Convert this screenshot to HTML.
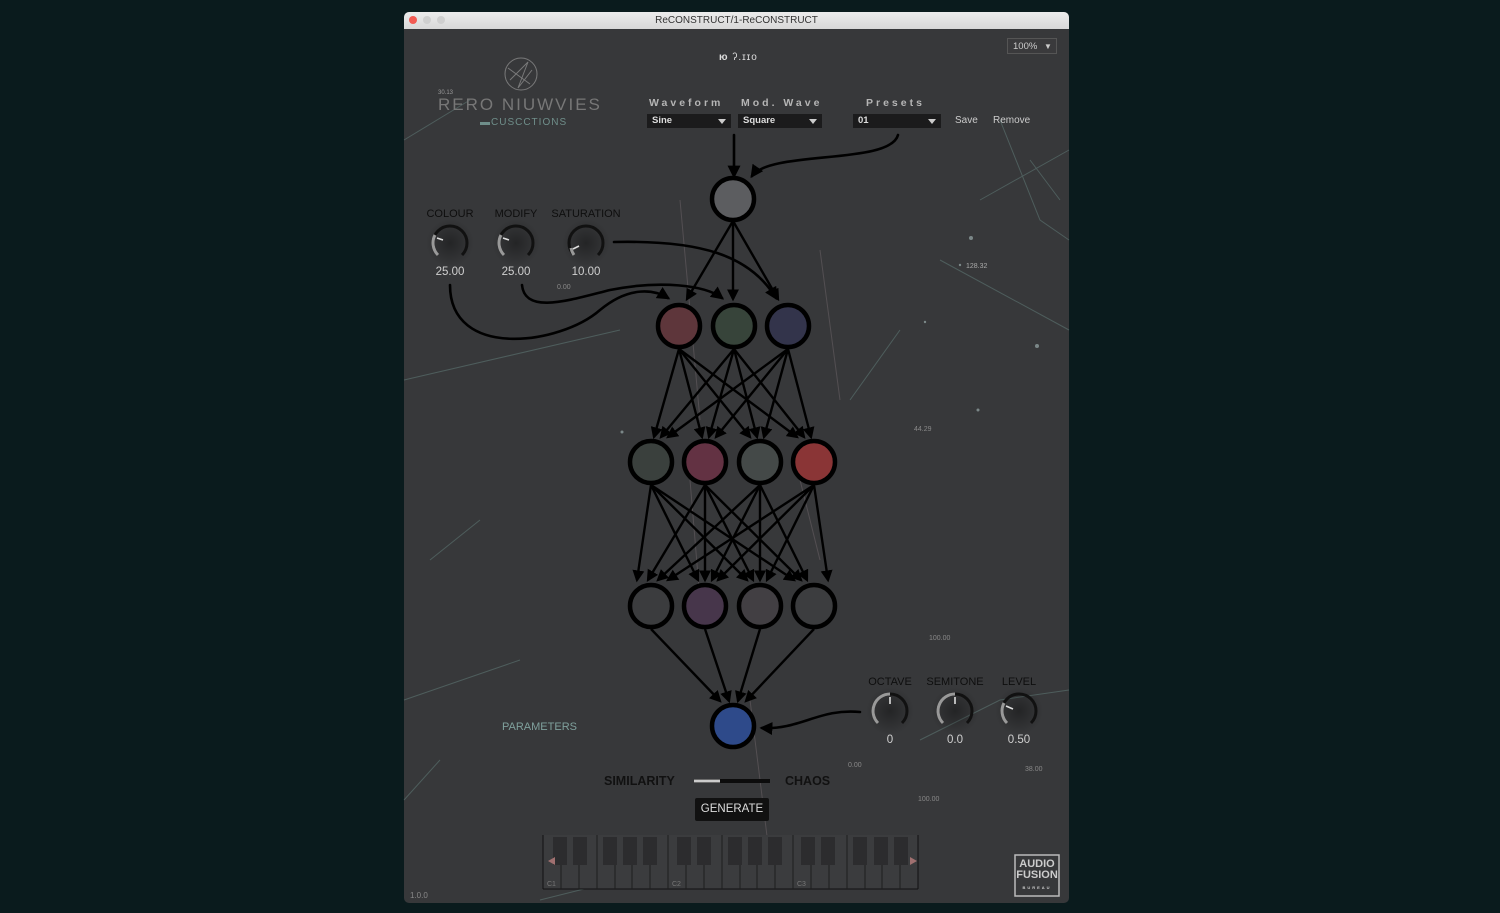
<!DOCTYPE html>
<html><head><meta charset="utf-8"><style>
body{margin:0;width:1500px;height:913px;background:#0a1b1d;overflow:hidden;font-family:"Liberation Sans",sans-serif;position:relative}
.win{position:absolute;left:404px;top:12px;width:665px;height:891px;background:#37383a;border-radius:5px;overflow:hidden}
.tb{height:17px;background:linear-gradient(#ececec,#d8d8d8);text-align:center;font-size:10px;line-height:17px;color:#333;position:relative}
.dot{position:absolute;top:4px;width:8px;height:8px;border-radius:50%;background:#cfcfcf}
.t{position:absolute;color:#bdbdbd;font-size:11px;white-space:nowrap}
.lbl{position:absolute;color:#0e0e0e;font-size:11px;white-space:nowrap;transform:translateX(-50%)}
.val{position:absolute;color:#d0d0d0;font-size:11.5px;white-space:nowrap;transform:translateX(-50%)}
.dd{position:absolute;height:14px;background:#1b1b1c;color:#ddd;font-size:9.5px;font-weight:bold;line-height:14px;padding-left:5px;box-sizing:border-box}
.dd:after{content:"";position:absolute;right:5px;top:5px;border:4px solid transparent;border-top:5px solid #ccc;border-bottom:0}
.hd{position:absolute;color:#b5b5b5;font-size:10.5px;font-weight:bold;letter-spacing:3px}
</style></head><body>
<div class="win">
<div class="tb"><span class="dot" style="left:5px;background:#f25a52"></span><span class="dot" style="left:19px"></span><span class="dot" style="left:33px"></span>ReCONSTRUCT/1-ReCONSTRUCT</div>
</div>
<svg width="1500" height="913" style="position:absolute;left:0;top:0">
<defs><marker id="a" markerWidth="5" markerHeight="5" refX="4" refY="2.5" orient="auto" markerUnits="strokeWidth"><path d="M0,0L5,2.5L0,5z" fill="#000"/></marker>
<radialGradient id="sh"><stop offset="0" stop-color="#000" stop-opacity=".35"/><stop offset="1" stop-color="#000" stop-opacity="0"/></radialGradient></defs>
<g stroke="#6a8c88" stroke-width="1" opacity=".45" fill="none">
<path d="M404 140L470 100M404 380L620 330M430 560L480 520M404 700L520 660M980 200L1069 150M940 260L1069 330M1000 120L1040 220L1069 240M850 400L900 330M920 740L1000 700L1069 690M404 800L440 760M540 900L620 880M1030 160L1060 200"/>
</g>
<g stroke="#8a7a80" stroke-width="1" opacity=".35" fill="none"><path d="M680 200L700 420M820 250L840 400M690 480L700 600M750 700L770 860M800 480L820 560"/></g>
<g fill="#9aa" opacity=".7"><circle cx="1037" cy="346" r="2"/><circle cx="978" cy="410" r="1.5"/><circle cx="622" cy="432" r="1.5"/><circle cx="925" cy="322" r="1.2"/><circle cx="971" cy="238" r="2"/><circle cx="960" cy="265" r="1.2"/></g>
<g fill="#888" font-size="7" font-family="Liberation Sans"><text x="557" y="289">0.00</text><text x="966" y="268" fill="#aaa">128.32</text><text x="914" y="431">44.29</text><text x="929" y="640">100.00</text><text x="848" y="767">0.00</text><text x="918" y="801">100.00</text><text x="1025" y="771">38.00</text><text x="410" y="898" font-size="8">1.0.0</text></g>
<g stroke="#000" stroke-width="2.6" fill="none" stroke-linecap="round">
<path d="M734 135V176" marker-end="url(#a)"/>
<path d="M898 135C890 165 770 150 752 176" marker-end="url(#a)"/>
<path d="M450 285C450 360 560 345 600 310C630 285 655 290 668 298" marker-end="url(#a)"/>
<path d="M522 285C525 315 570 300 610 290C660 280 705 285 722 298" marker-end="url(#a)"/>
<path d="M614 242C700 240 750 255 776 298" marker-end="url(#a)"/>
<path d="M860 712C820 708 800 730 762 728" marker-end="url(#a)"/>
</g>
<g stroke="#000" stroke-width="2.4" marker-end="url(#a)">
<line x1="733" y1="221" x2="687" y2="299"/><line x1="733" y1="221" x2="733" y2="299"/><line x1="733" y1="221" x2="778" y2="299"/>
<line x1="679" y1="349" x2="654" y2="437"/><line x1="679" y1="349" x2="702" y2="437"/><line x1="679" y1="349" x2="750" y2="437"/><line x1="679" y1="349" x2="797" y2="437"/>
<line x1="734" y1="349" x2="661" y2="437"/><line x1="734" y1="349" x2="709" y2="437"/><line x1="734" y1="349" x2="757" y2="437"/><line x1="734" y1="349" x2="804" y2="437"/>
<line x1="788" y1="349" x2="668" y2="437"/><line x1="788" y1="349" x2="716" y2="437"/><line x1="788" y1="349" x2="764" y2="437"/><line x1="788" y1="349" x2="811" y2="437"/>
<line x1="651" y1="485" x2="637" y2="580"/><line x1="651" y1="485" x2="698" y2="580"/><line x1="651" y1="485" x2="747" y2="580"/><line x1="651" y1="485" x2="794" y2="580"/>
<line x1="705" y1="485" x2="648" y2="580"/><line x1="705" y1="485" x2="705" y2="580"/><line x1="705" y1="485" x2="753" y2="580"/><line x1="705" y1="485" x2="801" y2="580"/>
<line x1="760" y1="485" x2="658" y2="580"/><line x1="760" y1="485" x2="712" y2="580"/><line x1="760" y1="485" x2="760" y2="580"/><line x1="760" y1="485" x2="807" y2="580"/>
<line x1="814" y1="485" x2="668" y2="580"/><line x1="814" y1="485" x2="718" y2="580"/><line x1="814" y1="485" x2="767" y2="580"/><line x1="814" y1="485" x2="828" y2="580"/>
<line x1="651" y1="629" x2="720" y2="701"/><line x1="705" y1="629" x2="729" y2="701"/><line x1="760" y1="629" x2="738" y2="701"/><line x1="814" y1="629" x2="746" y2="701"/>
</g>
<g stroke="#000" stroke-width="4.5">
<circle cx="733" cy="199" r="21" fill="#5c5d60"/>
<circle cx="679" cy="326" r="21" fill="#5e363b"/><circle cx="734" cy="326" r="21" fill="#37443a"/><circle cx="788" cy="326" r="21" fill="#33344b"/>
<circle cx="651" cy="462" r="21" fill="#3a403d"/><circle cx="705" cy="462" r="21" fill="#633243"/><circle cx="760" cy="462" r="21" fill="#444948"/><circle cx="814" cy="462" r="21" fill="#8a3536"/>
<circle cx="651" cy="606" r="21" fill="#3b3c3e"/><circle cx="705" cy="606" r="21" fill="#47364b"/><circle cx="760" cy="606" r="21" fill="#423f43"/><circle cx="814" cy="606" r="21" fill="#3c3d3f"/>
<circle cx="733" cy="726" r="21" fill="#2e4a8a"/>
</g>
<g fill="none" stroke-width="3">
<g transform="translate(450,243)"><circle r="24" fill="url(#sh)" stroke="none"/><path d="M-12 12A17 17 0 1 1 12 12" stroke="#111"/><path d="M-12 12A17 17 0 0 1 -15 -8" stroke="#999"/><line x1="-13" y1="-5" x2="-7" y2="-3" stroke="#ddd" stroke-width="1.6"/></g>
<g transform="translate(516,243)"><circle r="24" fill="url(#sh)" stroke="none"/><path d="M-12 12A17 17 0 1 1 12 12" stroke="#111"/><path d="M-12 12A17 17 0 0 1 -15 -8" stroke="#999"/><line x1="-13" y1="-5" x2="-7" y2="-3" stroke="#ddd" stroke-width="1.6"/></g>
<g transform="translate(586,243)"><circle r="24" fill="url(#sh)" stroke="none"/><path d="M-12 12A17 17 0 1 1 12 12" stroke="#111"/><path d="M-12 12A17 17 0 0 1 -15 5" stroke="#999"/><line x1="-13" y1="6" x2="-7" y2="3" stroke="#ddd" stroke-width="1.6"/></g>
<g transform="translate(890,711)"><circle r="24" fill="url(#sh)" stroke="none"/><path d="M-12 12A17 17 0 1 1 12 12" stroke="#111"/><path d="M-12 12A17 17 0 0 1 0 -17" stroke="#999"/><line x1="0" y1="-14" x2="0" y2="-7" stroke="#ddd" stroke-width="1.6"/></g>
<g transform="translate(955,711)"><circle r="24" fill="url(#sh)" stroke="none"/><path d="M-12 12A17 17 0 1 1 12 12" stroke="#111"/><path d="M-12 12A17 17 0 0 1 0 -17" stroke="#999"/><line x1="0" y1="-14" x2="0" y2="-7" stroke="#ddd" stroke-width="1.6"/></g>
<g transform="translate(1019,711)"><circle r="24" fill="url(#sh)" stroke="none"/><path d="M-12 12A17 17 0 1 1 12 12" stroke="#111"/><path d="M-12 12A17 17 0 0 1 -15 -8" stroke="#999"/><line x1="-13" y1="-5" x2="-6" y2="-2" stroke="#ddd" stroke-width="1.6"/></g>
</g>
<line x1="694" y1="781" x2="770" y2="781" stroke="#0c0c0c" stroke-width="4"/><line x1="694" y1="781" x2="720" y2="781" stroke="#ccc" stroke-width="3"/>
<g stroke="#8a8a8a" fill="none" stroke-width="1" opacity=".8"><circle cx="521" cy="74" r="16"/><path d="M510 80L528 62L518 88L532 70M508 68L530 84"/></g>
<g transform="translate(543,835)">
<rect x="0" y="0" width="375" height="54" fill="#3b3c3e"/>
<g stroke="#111" stroke-width="1">
<line x1="0" y1="0" x2="0" y2="54"/><line x1="0" y1="54" x2="375" y2="54"/><line x1="375" y1="0" x2="375" y2="54"/>
</g>
</g>
</svg>
<svg width="1500" height="913" style="position:absolute;left:0;top:0">
<g stroke="#1e1e1e">
<line x1="561" y1="865" x2="561" y2="889"/><line x1="579" y1="865" x2="579" y2="889"/><line x1="597" y1="835" x2="597" y2="889"/><line x1="615" y1="865" x2="615" y2="889"/><line x1="632" y1="865" x2="632" y2="889"/><line x1="650" y1="865" x2="650" y2="889"/><line x1="668" y1="835" x2="668" y2="889"/><line x1="686" y1="865" x2="686" y2="889"/><line x1="704" y1="865" x2="704" y2="889"/><line x1="722" y1="835" x2="722" y2="889"/><line x1="740" y1="865" x2="740" y2="889"/><line x1="757" y1="865" x2="757" y2="889"/><line x1="775" y1="865" x2="775" y2="889"/><line x1="793" y1="835" x2="793" y2="889"/><line x1="811" y1="865" x2="811" y2="889"/><line x1="829" y1="865" x2="829" y2="889"/><line x1="847" y1="835" x2="847" y2="889"/><line x1="865" y1="865" x2="865" y2="889"/><line x1="882" y1="865" x2="882" y2="889"/><line x1="900" y1="865" x2="900" y2="889"/>
</g>
<g fill="#2c2c2e">
<rect x="553" y="837" width="14" height="28"/><rect x="573" y="837" width="14" height="28"/><rect x="603" y="837" width="14" height="28"/><rect x="623" y="837" width="14" height="28"/><rect x="643" y="837" width="14" height="28"/><rect x="677" y="837" width="14" height="28"/><rect x="697" y="837" width="14" height="28"/><rect x="728" y="837" width="14" height="28"/><rect x="748" y="837" width="14" height="28"/><rect x="768" y="837" width="14" height="28"/><rect x="801" y="837" width="14" height="28"/><rect x="821" y="837" width="14" height="28"/><rect x="853" y="837" width="14" height="28"/><rect x="874" y="837" width="14" height="28"/><rect x="894" y="837" width="14" height="28"/>
</g>
<path d="M548 861L555 857V865z" fill="#a07070"/><path d="M917 861L910 857V865z" fill="#a07070"/>
<g fill="#777" font-size="7" font-family="Liberation Sans"><text x="547" y="886">C1</text><text x="672" y="886">C2</text><text x="797" y="886">C3</text></g>
<rect x="1015" y="855" width="44" height="41" fill="none" stroke="#bbb" stroke-width="1.5"/>
</svg>
<div class="t" style="left:1007px;top:38px;width:50px;height:16px;border:1px solid #555;background:#3a3a3c;font-size:9.5px;line-height:16px;padding-left:5px;box-sizing:border-box;color:#ccc">100% <span style="font-size:8px;margin-left:4px">▼</span></div>
<div class="t" style="left:719px;top:52px;color:#ddd;font-size:10px;letter-spacing:1px"><b>ю</b> ʔ.ɪɪo</div>
<div class="t" style="left:438px;top:90px;font-size:6px;color:#999">30.13</div>
<div class="t" style="left:438px;top:95px;font-size:17px;color:#777;letter-spacing:2px">RERO NIUWVIES</div>
<div class="t" style="left:480px;top:117px;font-size:10px;color:#6f8e8a;letter-spacing:1px">▬CUSCCTIONS</div>
<div class="hd" style="left:649px;top:97px">Waveform</div>
<div class="hd" style="left:741px;top:97px">Mod. Wave</div>
<div class="hd" style="left:866px;top:97px">Presets</div>
<div class="dd" style="left:647px;top:114px;width:84px">Sine</div>
<div class="dd" style="left:738px;top:114px;width:84px">Square</div>
<div class="dd" style="left:853px;top:114px;width:88px">01</div>
<div class="t" style="left:955px;top:115px;font-size:10px;color:#ccc">Save</div>
<div class="t" style="left:993px;top:115px;font-size:10px;color:#ccc">Remove</div>
<div class="lbl" style="left:450px;top:208px">COLOUR</div>
<div class="lbl" style="left:516px;top:208px">MODIFY</div>
<div class="lbl" style="left:586px;top:208px">SATURATION</div>
<div class="val" style="left:450px;top:266px">25.00</div>
<div class="val" style="left:516px;top:266px">25.00</div>
<div class="val" style="left:586px;top:266px">10.00</div>
<div class="lbl" style="left:890px;top:676px">OCTAVE</div>
<div class="lbl" style="left:955px;top:676px">SEMITONE</div>
<div class="lbl" style="left:1019px;top:676px">LEVEL</div>
<div class="val" style="left:890px;top:734px">0</div>
<div class="val" style="left:955px;top:734px">0.0</div>
<div class="val" style="left:1019px;top:734px">0.50</div>
<div class="t" style="left:502px;top:721px;color:#7fa09c;font-size:11px">PARAMETERS</div>
<div class="t" style="left:604px;top:774px;color:#111;font-size:12.5px;font-weight:bold">SIMILARITY</div>
<div class="t" style="left:785px;top:774px;color:#111;font-size:12.5px;font-weight:bold">CHAOS</div>
<div class="t" style="left:695px;top:798px;width:74px;height:23px;background:#111;color:#ddd;font-size:11.5px;line-height:23px;text-align:center;border-radius:2px">GENERATE</div>
<div class="t" style="left:1016px;top:859px;width:42px;text-align:center;color:#ccc;font-weight:bold;font-size:11px;line-height:11px">AUDIO<br>FUSION<br><span style="font-size:4px;letter-spacing:2px">BUREAU</span></div>
</body></html>
